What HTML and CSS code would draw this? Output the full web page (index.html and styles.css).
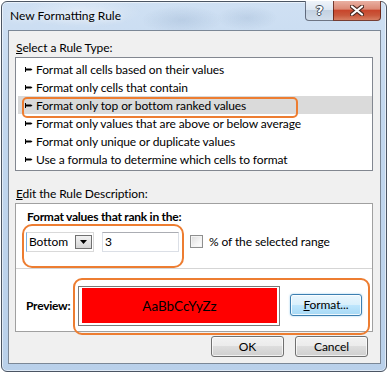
FILE: index.html
```html
<!DOCTYPE html>
<html>
<head>
<meta charset="utf-8">
<link rel="stylesheet" href="styles.css">
</head>
<body>
<div class="window">
  <div class="titlebar">
    <span class="title">New Formatting Rule</span>
    <div class="caption">
      <div class="cap-btn help">?</div>
      <div class="cap-btn close">
        <svg width="14" height="11" viewBox="0 0 14 11"><path d="M2 1.5 L12 9.5 M12 1.5 L2 9.5" stroke="#4a2a22" stroke-width="4.2" stroke-linecap="round"/><path d="M2 1.5 L12 9.5 M12 1.5 L2 9.5" stroke="#fff" stroke-width="2.2" stroke-linecap="round"/></svg>
      </div>
    </div>
  </div>
  <div class="client">
    <div class="label"><u>S</u>elect a Rule Type:</div>
    <div class="listbox">
      <div class="item"><svg class="arrow" width="8" height="5" viewBox="0 0 8 5"><path d="M0 0h1v5H0z M1 1.5h5v2H1z M6 1.5 L7.5 2.5 L6 3.5z" fill="#000"/></svg><span>Format all cells based on their values</span></div>
      <div class="item"><svg class="arrow" width="8" height="5" viewBox="0 0 8 5"><path d="M0 0h1v5H0z M1 1.5h5v2H1z M6 1.5 L7.5 2.5 L6 3.5z" fill="#000"/></svg><span>Format only cells that contain</span></div>
      <div class="item selected"><svg class="arrow" width="8" height="5" viewBox="0 0 8 5"><path d="M0 0h1v5H0z M1 1.5h5v2H1z M6 1.5 L7.5 2.5 L6 3.5z" fill="#000"/></svg><span>Format only top or bottom ranked values</span></div>
      <div class="item"><svg class="arrow" width="8" height="5" viewBox="0 0 8 5"><path d="M0 0h1v5H0z M1 1.5h5v2H1z M6 1.5 L7.5 2.5 L6 3.5z" fill="#000"/></svg><span>Format only values that are above or below average</span></div>
      <div class="item"><svg class="arrow" width="8" height="5" viewBox="0 0 8 5"><path d="M0 0h1v5H0z M1 1.5h5v2H1z M6 1.5 L7.5 2.5 L6 3.5z" fill="#000"/></svg><span>Format only unique or duplicate values</span></div>
      <div class="item"><svg class="arrow" width="8" height="5" viewBox="0 0 8 5"><path d="M0 0h1v5H0z M1 1.5h5v2H1z M6 1.5 L7.5 2.5 L6 3.5z" fill="#000"/></svg><span>Use a formula to determine which cells to format</span></div>
    </div>
    <div class="label label-edit"><u>E</u>dit the Rule Description:</div>
    <div class="desc">
      <div class="desc-top">
        <div class="bold">Format values that rank in the:</div>
        <div class="controls">
          <div class="combo"><span class="combo-text">Bottom</span><span class="dd"><svg width="7" height="4" viewBox="0 0 7 4"><path d="M0 0 H7 L3.5 4z" fill="#000"/></svg></span></div>
          <div class="textbox">3</div>
          <div class="checkbox"></div>
          <div class="check-label">% of the selected ran<u>g</u>e</div>
        </div>
      </div>
      <div class="desc-bottom">
        <div class="bold preview-label">Preview:</div>
        <div class="preview"><div class="preview-fill">AaBbCcYyZz</div></div>
        <div class="btn btn-default"><span><u>F</u>ormat...</span></div>
      </div>
    </div>
    <div class="buttons">
      <div class="btn">OK</div>
      <div class="btn">Cancel</div>
    </div>
  </div>
  <div class="mark mark1"></div>
  <div class="mark mark2"></div>
  <div class="mark mark3"></div>
</div>
</body>
</html>
```

FILE: styles.css
```css
* { box-sizing: border-box; }
html, body { margin: 0; padding: 0; background: #ffffff; }
body {
  width: 389px;
  height: 373px;
  overflow: hidden;
  font-family: "Lato", "Liberation Sans", sans-serif;
  font-size: 12px;
  letter-spacing: -0.1px;
  color: #000;
}
.window {
  position: relative;
  margin: 1px 0 0 1px;
  width: 386px;
  height: 371px;
  border: 1px solid #4b5563;
  border-radius: 6px;
  background: linear-gradient(180deg, #cfe0f3 0%, #c2d7ee 30%, #b9d0ea 100%);
  box-shadow: inset 0 0 0 1px rgba(255,255,255,0.55);
  display: flex;
  flex-direction: column;
}
.titlebar {
  height: 28px;
  display: flex;
  padding: 0 5px 0 8px;
  background:
    radial-gradient(ellipse 40px 14px at 180px 18px, rgba(150,175,205,0.35), transparent),
    radial-gradient(ellipse 30px 12px at 245px 16px, rgba(150,175,205,0.3), transparent),
    radial-gradient(ellipse 60px 16px at 80px 10px, rgba(255,255,255,0.35), transparent);
  border-radius: 5px 5px 0 0;
}
.title {
  flex: 1;
  line-height: 28px;
  font-size: 12px;
  letter-spacing: 0;
  color: #000;
  text-shadow: 0 0 6px rgba(255,255,255,0.9);
}
.caption {
  display: flex;
  align-self: flex-start;
  margin-top: -1px;
  height: 20px;
}
.cap-btn {
  height: 20px;
  display: flex;
  align-items: center;
  justify-content: center;
  border: 1px solid rgba(40,50,70,0.65);
  border-top: none;
}
.help {
  width: 28px;
  border-right: none;
  border-radius: 0 0 0 4px;
  background: linear-gradient(180deg, #eef3f9 0%, #dde7f2 45%, #c3d1e1 50%, #d2deeb 100%);
  color: #fff;
  font-family: "DejaVu Sans", sans-serif;
  font-weight: bold;
  font-size: 13px;
  text-shadow: 1px 0 0 #3d4a5a, -1px 0 0 #3d4a5a, 0 1px 0 #3d4a5a, 0 -1px 0 #3d4a5a;
}
.close {
  width: 48px;
  border-radius: 0 0 4px 0;
  border-color: rgba(80,25,15,0.75);
  background: linear-gradient(180deg, #e9b0a2 0%, #dc8a76 42%, #c8462c 50%, #c9583c 75%, #d77f63 100%);
}
.client {
  height: 334px;
  margin: 0 5px 0 6px;
  border: 1px solid #7b8796;
  background: #f0f0f0;
  padding: 9px 7px 0 6px;
}
.label {
  line-height: 16px;
  margin-left: 1px;
}
.listbox {
  margin-top: 1px;
  height: 114px;
  border: 1px solid #828790;
  background: #fff;
  padding: 2px 0 2px 0;
}
.item {
  height: 18px;
  margin-left: 2px;
  display: flex;
  align-items: center;
  padding-left: 7px;
  gap: 3px;
}
.item.selected { background: #dadada; }
.arrow { flex: none; }
.label-edit { margin-top: 15px; }
.desc {
  margin-top: 1px;
  border: 1px solid #a0a0a0;
  background: #fff;
}
.desc-top {
  height: 65px;
  padding: 5px 0 0 11px;
  border-bottom: 1px solid #d5d5d5;
}
.bold { font-weight: bold; line-height: 16px; letter-spacing: -0.25px; }
.controls {
  margin-top: 7px;
  display: flex;
  align-items: flex-start;
}
.combo {
  margin-left: -1px;
  width: 68px;
  height: 20px;
  border: 1px solid #d9d9d9;
  border-left-color: #7ab0e4;
  display: flex;
  align-items: center;
}
.combo-text { padding-left: 2px; line-height: 18px; }
.dd {
  margin: 0 1px 0 auto;
  width: 17px;
  height: 14px;
  border: 1px solid #707070;
  background: linear-gradient(180deg, #f2f2f2 0%, #e4e4e4 50%, #d4d4d4 100%);
  display: flex;
  align-items: center;
  justify-content: center;
}
.textbox {
  margin-left: 8px;
  width: 77px;
  height: 20px;
  border: 1px solid #dbdfe6;
  border-top-color: #abadb3;
  padding-left: 2px;
  line-height: 18px;
}
.checkbox {
  margin: 3px 0 0 11px;
  width: 13px;
  height: 13px;
  border: 1px solid #8e8f8f;
  background: linear-gradient(135deg, #dcdcdc 0%, #f4f4f4 60%, #ffffff 100%);
  box-shadow: inset 0 0 0 1px #f4f4f4;
}
.check-label {
  margin-left: 6px;
  line-height: 20px;
}
.desc-bottom {
  height: 62px;
  display: flex;
  align-items: flex-start;
  padding-left: 10px;
}
.preview-label {
  width: 52px;
  margin-top: 29px;
}
.preview {
  margin-top: 17px;
  width: 202px;
  height: 40px;
  border: 1px solid #7a7a7a;
  padding: 1px 2px 2px 3px;
  background: #fff;
}
.preview-fill {
  height: 100%;
  background: #ff0000;
  display: flex;
  align-items: center;
  justify-content: center;
  font-size: 13.5px;
  letter-spacing: 0;
  color: #000;
}
.btn {
  width: 73px;
  height: 21px;
  border: 1px solid #707070;
  border-radius: 3px;
  background: linear-gradient(180deg, #f2f2f2 0%, #ebebeb 49%, #dddddd 50%, #cfcfcf 100%);
  box-shadow: inset 0 0 0 1px rgba(255,255,255,0.7);
  display: flex;
  align-items: center;
  justify-content: center;
  line-height: 16px;
}
.btn-default {
  margin: 25px 0 0 10px;
  width: 72px;
  height: 22px;
  border-color: #3c7fb1;
  background: linear-gradient(180deg, #eaf6fd 0%, #d9f0fc 49%, #bee6fd 50%, #a7d9f5 100%);
  box-shadow: inset 0 0 0 1px rgba(255,255,255,0.8), 0 0 2px rgba(60,160,220,0.6);
}
.buttons {
  display: flex;
  justify-content: flex-end;
  gap: 11px;
  margin-top: 4px;
  padding-right: 5px;
}
.mark {
  position: absolute;
  border: 2.5px solid #ed7d31;
}
.mark1 { left: 20px; top: 95px; width: 276px; height: 21px; border-radius: 5px; }
.mark2 { left: 20px; top: 222px; width: 162px; height: 44px; border-radius: 10px; }
.mark3 { left: 71px; top: 276px; width: 297px; height: 57px; border-radius: 9px; }
```
